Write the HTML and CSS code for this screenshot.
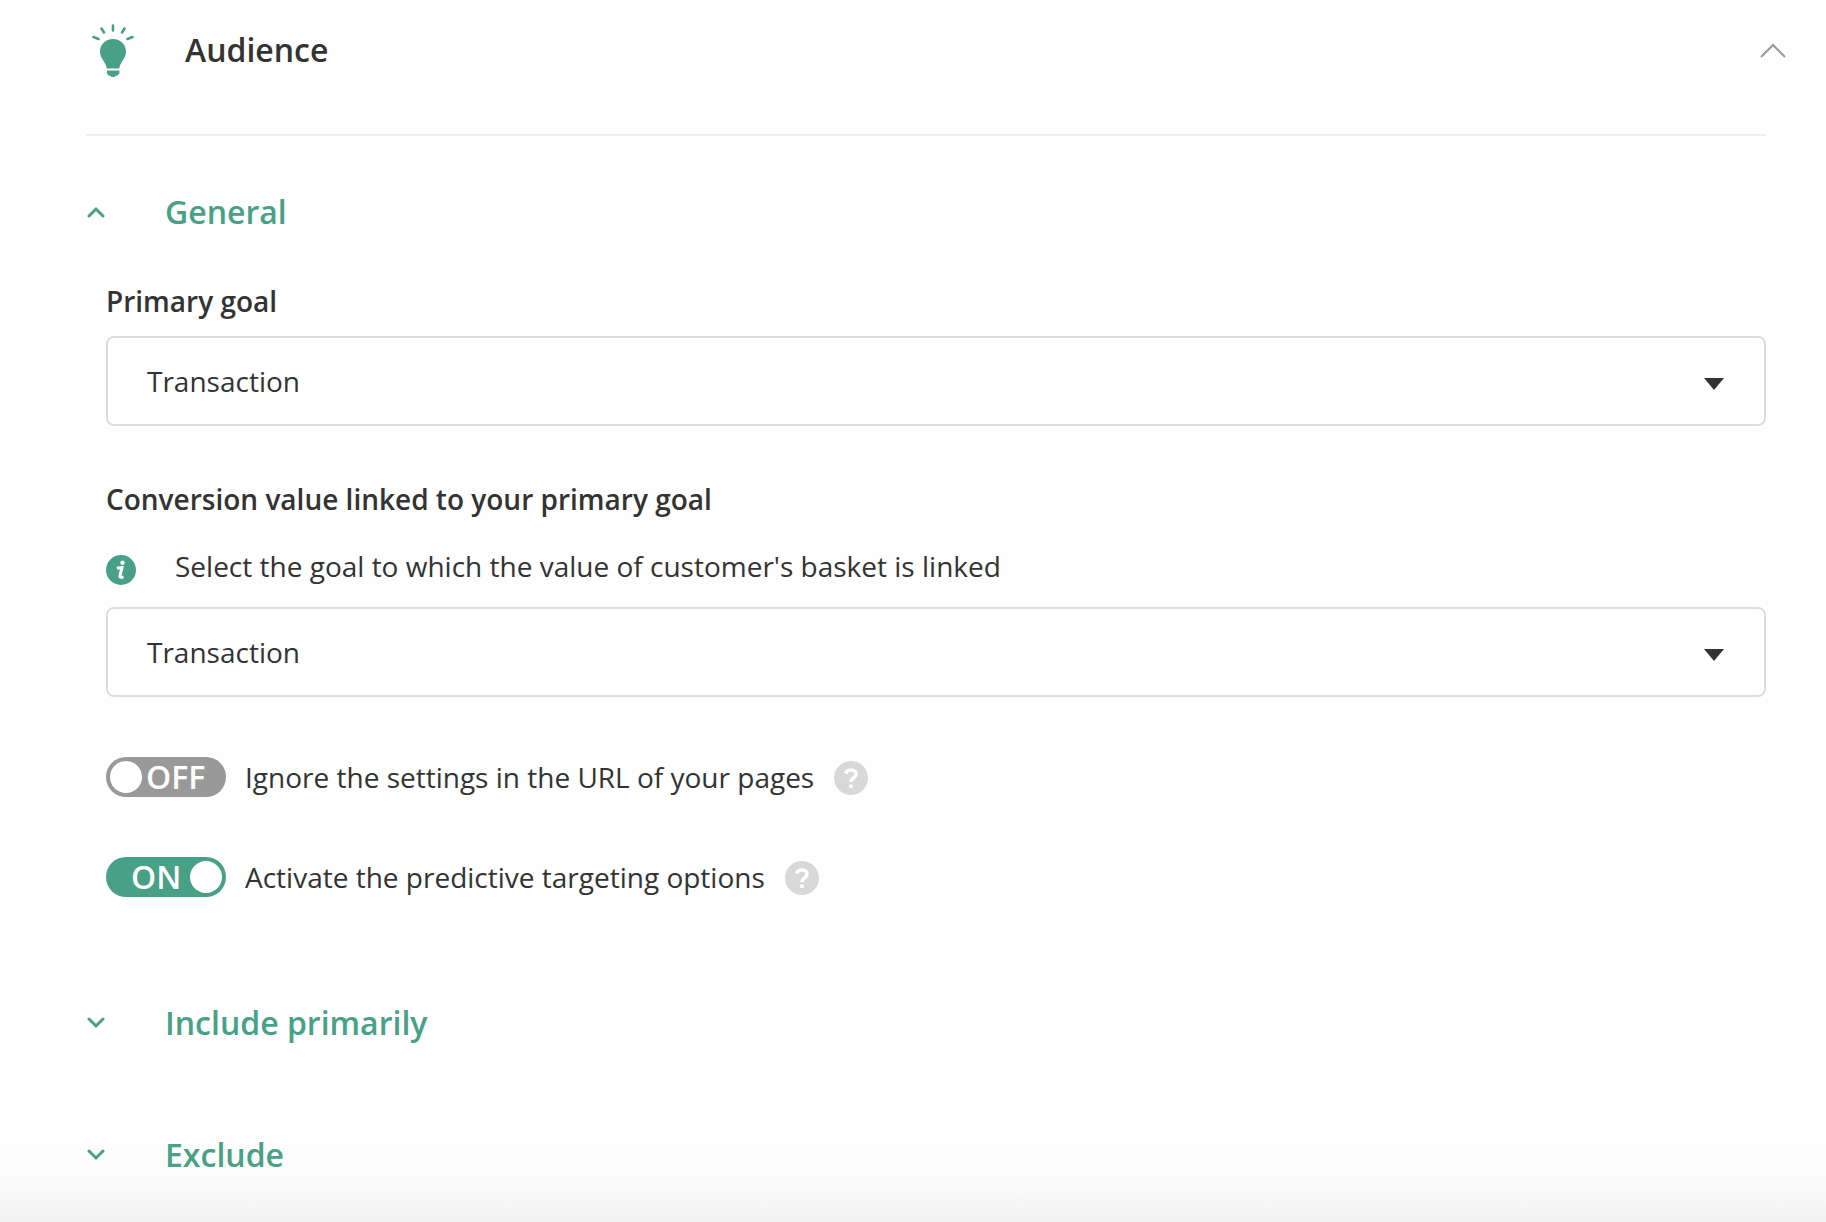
FILE: index.html
```html
<!DOCTYPE html>
<html lang="en">
<head>
    <meta charset="UTF-8">
    <meta name="viewport" content="width=device-width, initial-scale=1.0">
    <title>Audience</title>
    <link rel="stylesheet" href="styles.css">
</head>
<body>
    <main class="panel">
        <header class="panel-header">
            <svg class="bulb" viewBox="0 -1 42 54" aria-hidden="true">
                <path d="M21 15c-7.600 0-13 5.600-13 12.500 0 5 2.500 7.500 4.500 11 1.200 2.200 2 4 2.300 6h12.400c.3-2 1.100-3.800 2.300-6 2-3.500 4.500-6 4.500-11C34 20.600 28.600 15 21 15z"/>
                <path d="M15 46.500h12.400v3l-2 2-2 .5-1.400 1.500h-2l-1.500-1.500-2-.5-1.500-2z"/>
                <path class="ray" d="M21 1.500v5M9.500 4.500l2.500 4M32.500 4.500l-2.500 4M1.500 13l5 2M40.500 13l-5 2"/>
            </svg>
            <h1>Audience</h1>
            <button class="collapse" type="button" aria-label="Collapse Audience">
                <svg viewBox="0 0 26 15" aria-hidden="true"><path d="M1 14L13 2l12 12"/></svg>
            </button>
        </header>

        <div class="panel-body">
            <h2 class="section-title">
                <button type="button" aria-expanded="true">
                    <svg viewBox="0 0 20 12" aria-hidden="true"><path d="M3 10l7-7 7 7"/></svg>
                    General
                </button>
            </h2>

            <form class="settings">
                <div class="field">
                    <label class="field-label" for="primaryGoal">Primary goal</label>
                    <div class="select">
                        <select id="primaryGoal">
                            <option>Transaction</option>
                        </select>
                    </div>
                </div>

                <div class="field">
                    <label class="field-label" for="conversionValue">Conversion value linked to your primary goal</label>
                    <p class="hint" id="conversionHint">
                        <svg viewBox="0 0 30 30" aria-hidden="true">
                            <circle cx="15" cy="15" r="15"/>
                            <circle class="mark" cx="16.500" cy="7.800" r="2.200"/>
                            <path class="mark-line" d="M11 13.500c2-.8 3.500-1 5-1l-2 8c-.4 1.800.2 2.500 3.500 1.300"/>
                        </svg>
                        Select the goal to which the value of customer's basket is linked
                    </p>
                    <div class="select">
                        <select id="conversionValue" aria-describedby="conversionHint">
                            <option>Transaction</option>
                        </select>
                    </div>
                </div>

                <div class="option">
                    <span class="switch">
                        <input type="checkbox" id="ignoreSettings">
                        <span class="state">OFF</span>
                    </span>
                    <label for="ignoreSettings">Ignore the settings in the URL of your pages</label>
                    <button class="help" type="button" aria-label="Help">
                        <svg viewBox="0 0 34 34" aria-hidden="true">
                            <circle cx="17" cy="17" r="17"/>
                            <path d="M11.500 12.500c1-2.500 3-3.500 5.500-3.500 3 0 5 1.800 5 4.200 0 4-5 3.600-5 7.800M17 23.500v3.500"/>
                        </svg>
                    </button>
                </div>

                <div class="option">
                    <span class="switch">
                        <input type="checkbox" id="predictive" checked>
                        <span class="state">ON</span>
                    </span>
                    <label for="predictive">Activate the predictive targeting options</label>
                    <button class="help" type="button" aria-label="Help">
                        <svg viewBox="0 0 34 34" aria-hidden="true">
                            <circle cx="17" cy="17" r="17"/>
                            <path d="M11.500 12.500c1-2.500 3-3.500 5.500-3.500 3 0 5 1.800 5 4.200 0 4-5 3.600-5 7.800M17 23.500v3.500"/>
                        </svg>
                    </button>
                </div>
            </form>

            <h2 class="section-title">
                <button type="button" aria-expanded="false">
                    <svg viewBox="0 0 20 12" aria-hidden="true"><path d="M3 2l7 7 7-7"/></svg>
                    Include primarily
                </button>
            </h2>

            <h2 class="section-title">
                <button type="button" aria-expanded="false">
                    <svg viewBox="0 0 20 12" aria-hidden="true"><path d="M3 2l7 7 7-7"/></svg>
                    Exclude
                </button>
            </h2>
        </div>
    </main>
</body>
</html>
```

FILE: styles.css
```css
* {
    box-sizing: border-box;
}
body {
    margin: 0;
    min-height: 100vh;
    font-family: "Open Sans", sans-serif;
    font-size: 28px;
    line-height: 40px;
    color: #333;
    background: #fefefe linear-gradient(to top, #f1f1f1, #f9f9f9 30px, #fefefe 80px) no-repeat;
}
h1, h2, p {
    margin: 0;
}
button {
    padding: 0;
    border: 0;
    background: none;
    font: inherit;
    color: inherit;
    cursor: pointer;
}
svg {
    display: block;
    flex: none;
}
.panel {
    padding: 0 60px 40px 86px;
}

/* Header */
.panel-header {
    display: flex;
    align-items: center;
    height: 136px;
    padding: 0 0 34px 6px;
    border-bottom: 2px solid #eee;
}
.bulb {
    width: 42px;
    height: 54px;
    fill: #48a187;
}
.bulb .ray {
    fill: none;
    stroke: #48a187;
    stroke-width: 2.6;
    stroke-linecap: round;
}
h1 {
    margin-left: 51px;
    font-size: 32px;
    font-weight: 600;
    line-height: 44px;
}
.collapse {
    margin-left: auto;
    margin-right: -20px;
}
.collapse svg {
    width: 26px;
    height: 15px;
    fill: none;
    stroke: #999;
    stroke-width: 2;
}

/* Sections */
.section-title {
    margin-top: 88px;
    font-size: 32px;
    font-weight: 600;
    line-height: 44px;
    color: #48a187;
}
.section-title:first-child {
    margin-top: 54px;
}
.section-title button {
    display: flex;
    align-items: center;
    gap: 59px;
}
.section-title svg {
    width: 20px;
    height: 12px;
    fill: none;
    stroke: #48a187;
    stroke-width: 3;
    stroke-linecap: round;
}
.settings {
    margin: 47px 0 104px;
    padding-left: 20px;
}

/* Fields */
.field {
    margin-bottom: 53px;
}
.field-label {
    display: block;
    margin-bottom: 15px;
    font-weight: 600;
}
.hint {
    display: flex;
    align-items: center;
    gap: 39px;
    margin: 27px 0 21px;
}
.hint svg {
    width: 30px;
    height: 30px;
    margin-top: 8px;
    fill: #48a187;
}
.hint .mark {
    fill: #fff;
}
.hint .mark-line {
    fill: none;
    stroke: #fff;
    stroke-width: 3;
}
.select {
    position: relative;
}
.select::after {
    content: "";
    position: absolute;
    top: 42px;
    right: 42px;
    border: 10px solid transparent;
    border-top: 12px solid #333;
    border-bottom: 0;
    pointer-events: none;
}
select {
    display: block;
    width: 100%;
    height: 90px;
    padding: 0 80px 0 39px;
    border: 2px solid #ddd;
    border-radius: 8px;
    appearance: none;
    background: #fff;
    font: inherit;
    color: inherit;
}

/* Switches */
.option {
    display: flex;
    align-items: center;
    height: 40px;
    margin-top: 60px;
}
.switch {
    position: relative;
    margin-right: 19px;
    color: #fff;
    font-size: 32px;
    font-weight: 600;
}
.switch input {
    display: block;
    width: 120px;
    height: 40px;
    margin: 0;
    padding: 4px;
    border-radius: 20px;
    appearance: none;
    background: #999;
    cursor: pointer;
}
.switch input::before {
    content: "";
    display: block;
    width: 32px;
    height: 32px;
    border-radius: 50%;
    background: #fff;
}
.switch input:checked {
    background: #48a187;
}
.switch input:checked::before {
    margin-left: auto;
}
.state {
    position: absolute;
    top: 0;
    left: 40px;
    pointer-events: none;
}
input:checked + .state {
    left: 25px;
}
.help {
    margin: 2px 0 0 20px;
}
.help svg {
    width: 34px;
    height: 34px;
    fill: #d8d8d8;
}
.help path {
    fill: none;
    stroke: #fff;
    stroke-width: 3.6;
}
```
